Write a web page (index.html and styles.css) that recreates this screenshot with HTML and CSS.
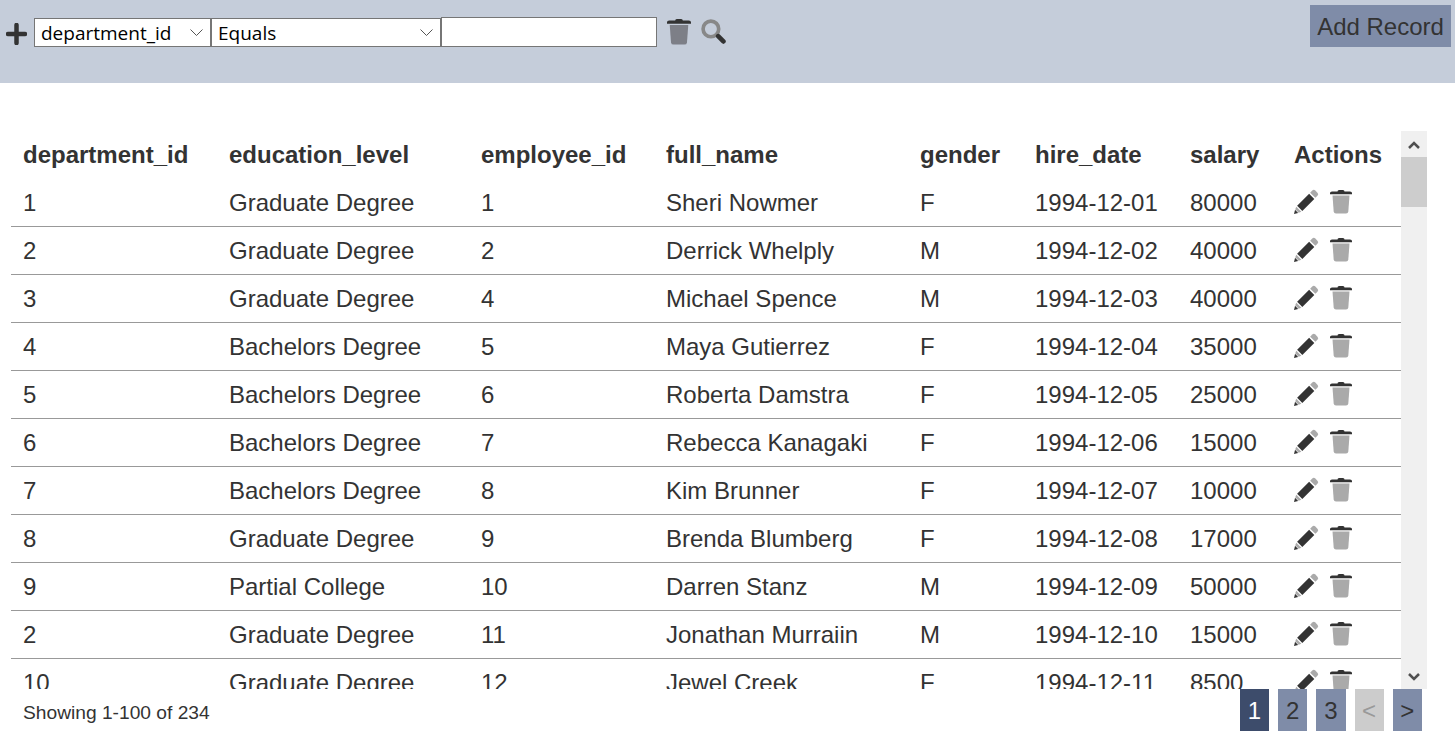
FILE: index.html
```html
<!DOCTYPE html>
<html lang="en">
<head>
    <meta charset="UTF-8">
    <title>Employees</title>
    <link rel="stylesheet" href="styles.css">
</head>
<body>
    <svg class="icon-defs" width="0" height="0">
        <symbol id="i-trash" viewBox="0 0 22 24">
            <path class="lid" d="M0 3.500Q0 2 2 2H7.500Q7.500 .5 9 .5H13Q14.500 .5 14.500 2H20Q22 2 22 3.500V4.800H0Z"/>
            <path class="body" d="M2.500 6H19.500L18.300 22Q18.100 24 16 24H6Q3.900 24 3.700 22Z"/>
        </symbol>
        <symbol id="i-pencil" viewBox="0 0 24 24">
            <path class="eraser" d="M17.500 1.500Q19 0 20.500 1.500L22.500 3.500Q24 5 22.500 6.500L20.500 8.500L15.500 3.500Z"/>
            <path class="shaft" d="M14.500 4.500L19.500 9.500L8 21L3 16Z"/>
            <path class="eraser" d="M2.200 17L7 21.800L4.500 22.800L1.200 19.500Z"/>
            <path class="shaft" d="M1 20L4 23L0 24Z"/>
        </symbol>
        <symbol id="i-search" viewBox="0 0 24 24">
            <circle class="lens" cx="9.500" cy="9.500" r="7.500"/>
            <path class="handle" d="M16.500 16.500L21.500 21.500"/>
        </symbol>
    </svg>

    <div class="toolbar">
        <div class="filter">
            <svg class="plus" viewBox="0 0 21 22"><path d="M10.500 2V20M2 11H19"/></svg>
            <select class="field-select">
                <option>department_id</option>
            </select>
            <select class="op-select">
                <option>Equals</option>
            </select>
            <input type="text" class="filter-input">
            <svg class="tool-icon trash-dark"><use href="#i-trash"/></svg>
            <svg class="tool-icon search-icon"><use href="#i-search"/></svg>
        </div>
        <button class="add-button">Add Record</button>
    </div>

    <div class="table-wrap">
        <div class="table-scroll">
            <table class="records">
                <colgroup>
                    <col class="col-dept"><col class="col-edu"><col class="col-emp"><col class="col-name">
                    <col class="col-gender"><col class="col-hire"><col class="col-salary"><col class="col-actions">
                </colgroup>
                <thead>
                    <tr>
                        <th>department_id</th><th>education_level</th><th>employee_id</th><th>full_name</th>
                        <th>gender</th><th>hire_date</th><th>salary</th><th>Actions</th>
                    </tr>
                </thead>
                <tbody>
                    <tr><td>1</td><td>Graduate Degree</td><td>1</td><td>Sheri Nowmer</td><td>F</td><td>1994-12-01</td><td>80000</td><td><svg class="row-icon edit"><use href="#i-pencil"/></svg><svg class="row-icon del"><use href="#i-trash"/></svg></td></tr>
                    <tr><td>2</td><td>Graduate Degree</td><td>2</td><td>Derrick Whelply</td><td>M</td><td>1994-12-02</td><td>40000</td><td><svg class="row-icon edit"><use href="#i-pencil"/></svg><svg class="row-icon del"><use href="#i-trash"/></svg></td></tr>
                    <tr><td>3</td><td>Graduate Degree</td><td>4</td><td>Michael Spence</td><td>M</td><td>1994-12-03</td><td>40000</td><td><svg class="row-icon edit"><use href="#i-pencil"/></svg><svg class="row-icon del"><use href="#i-trash"/></svg></td></tr>
                    <tr><td>4</td><td>Bachelors Degree</td><td>5</td><td>Maya Gutierrez</td><td>F</td><td>1994-12-04</td><td>35000</td><td><svg class="row-icon edit"><use href="#i-pencil"/></svg><svg class="row-icon del"><use href="#i-trash"/></svg></td></tr>
                    <tr><td>5</td><td>Bachelors Degree</td><td>6</td><td>Roberta Damstra</td><td>F</td><td>1994-12-05</td><td>25000</td><td><svg class="row-icon edit"><use href="#i-pencil"/></svg><svg class="row-icon del"><use href="#i-trash"/></svg></td></tr>
                    <tr><td>6</td><td>Bachelors Degree</td><td>7</td><td>Rebecca Kanagaki</td><td>F</td><td>1994-12-06</td><td>15000</td><td><svg class="row-icon edit"><use href="#i-pencil"/></svg><svg class="row-icon del"><use href="#i-trash"/></svg></td></tr>
                    <tr><td>7</td><td>Bachelors Degree</td><td>8</td><td>Kim Brunner</td><td>F</td><td>1994-12-07</td><td>10000</td><td><svg class="row-icon edit"><use href="#i-pencil"/></svg><svg class="row-icon del"><use href="#i-trash"/></svg></td></tr>
                    <tr><td>8</td><td>Graduate Degree</td><td>9</td><td>Brenda Blumberg</td><td>F</td><td>1994-12-08</td><td>17000</td><td><svg class="row-icon edit"><use href="#i-pencil"/></svg><svg class="row-icon del"><use href="#i-trash"/></svg></td></tr>
                    <tr><td>9</td><td>Partial College</td><td>10</td><td>Darren Stanz</td><td>M</td><td>1994-12-09</td><td>50000</td><td><svg class="row-icon edit"><use href="#i-pencil"/></svg><svg class="row-icon del"><use href="#i-trash"/></svg></td></tr>
                    <tr><td>2</td><td>Graduate Degree</td><td>11</td><td>Jonathan Murraiin</td><td>M</td><td>1994-12-10</td><td>15000</td><td><svg class="row-icon edit"><use href="#i-pencil"/></svg><svg class="row-icon del"><use href="#i-trash"/></svg></td></tr>
                    <tr><td>10</td><td>Graduate Degree</td><td>12</td><td>Jewel Creek</td><td>F</td><td>1994-12-11</td><td>8500</td><td><svg class="row-icon edit"><use href="#i-pencil"/></svg><svg class="row-icon del"><use href="#i-trash"/></svg></td></tr>
                </tbody>
            </table>
        </div>
        <div class="scrollbar">
            <svg class="scroll-arrow" viewBox="0 0 12 8"><path d="M1 7L6 2L11 7"/></svg>
            <div class="scroll-track"><div class="scroll-thumb"></div></div>
            <svg class="scroll-arrow" viewBox="0 0 12 8"><path d="M1 1L6 6L11 1"/></svg>
        </div>
    </div>

    <div class="footer">
        <div class="showing">Showing 1-100 of 234</div>
        <div class="pager">
            <a href="#" class="page active">1</a>
            <a href="#" class="page">2</a>
            <a href="#" class="page">3</a>
            <a href="#" class="page disabled">&lt;</a>
            <a href="#" class="page">&gt;</a>
        </div>
    </div>
</body>
</html>
```
FILE: styles.css
```css
body {
    margin: 0;
    font-family: 'Liberation Sans', Arial, sans-serif;
    color: #333;
    background-color: #fff;
}

.icon-defs {
    display: block;
    height: 0;
}

.toolbar {
    display: flex;
    justify-content: space-between;
    align-items: flex-start;
    height: 83px;
    background-color: #c5cdda;
}

.filter {
    display: flex;
    align-items: flex-start;
    padding: 17px 0 0 5px;
}

.plus {
    width: 21px;
    height: 22px;
    margin: 6px 7px 0 1px;
    fill: none;
    stroke: #333;
    stroke-width: 4.5px;
    stroke-linecap: round;
}

select {
    appearance: none;
    height: 29px;
    margin-top: 1px;
    padding: 0 0 0 6px;
    border: 1px solid #767676;
    border-radius: 0;
    font-family: 'Open Sans', sans-serif;
    font-size: 19px;
    color: #000;
    background: #fff url("data:image/svg+xml,%3Csvg xmlns='http://www.w3.org/2000/svg' width='13' height='7'%3E%3Cpath d='M.5 .5L6.500 6.500L12.500 .5' fill='none' stroke='%23555'/%3E%3C/svg%3E") no-repeat right 7px center;
}

.field-select {
    width: 177px;
}

.op-select {
    width: 230px;
}

.filter-input {
    box-sizing: border-box;
    width: 216px;
    height: 30px;
    margin: 0;
    border: 1px solid #767676;
    background-color: #fff;
}

.tool-icon {
    width: 24px;
    height: 27px;
}

.trash-dark {
    margin: 1px 0 0 10px;
    --lid: #333;
    --body: #7d7f87;
}

.search-icon {
    width: 25px;
    height: 25px;
    margin: 2px 0 0 10px;
}

.lid { fill: var(--lid, #333); }
.body { fill: var(--body, #aaa); }
.shaft { fill: #333; }
.eraser { fill: #aaa; }
.lens { fill: none; stroke: #888; stroke-width: 3.5px; }
.handle { stroke: #333; stroke-width: 4.5px; stroke-linecap: round; }

.add-button {
    width: 141px;
    height: 42px;
    margin: 5px 4px 0 0;
    padding: 2px 0 0;
    border: none;
    font-family: 'Liberation Sans', Arial, sans-serif;
    font-size: 24px;
    color: #333;
    background-color: #7f8ca8;
}

.table-wrap {
    display: flex;
    height: 558px;
    margin: 48px 28px 0 11px;
}

.table-scroll {
    flex: 1;
    overflow: hidden;
}

.records {
    width: 1390px;
    table-layout: fixed;
    border-collapse: collapse;
    font-size: 24px;
}

.col-dept { width: 206px; }
.col-edu { width: 252px; }
.col-emp { width: 185px; }
.col-name { width: 254px; }
.col-gender { width: 115px; }
.col-hire { width: 155px; }
.col-salary { width: 104px; }
.col-actions { width: 119px; }

.records th,
.records td {
    height: 47px;
    padding: 0 0 0 12px;
    text-align: left;
    white-space: nowrap;
}

.records th {
    height: 48px;
}

.records td {
    border-bottom: 1px solid #999;
}

.row-icon {
    height: 25px;
    margin-bottom: 4px;
    vertical-align: middle;
}

.row-icon.edit {
    width: 25px;
    margin-right: 11px;
}

.row-icon.del {
    width: 22px;
}

.scrollbar {
    display: flex;
    flex-direction: column;
    align-items: center;
    width: 26px;
    background-color: #f0f0f0;
}

.scroll-arrow {
    flex: none;
    width: 12px;
    height: 8px;
    margin: 10px 0 8px;
    fill: none;
    stroke: #505050;
    stroke-width: 2.5px;
}

.scroll-track {
    flex: 1;
    width: 100%;
}

.scroll-thumb {
    height: 50px;
    background-color: #cdcdcd;
}

.footer {
    display: flex;
    justify-content: space-between;
    align-items: flex-start;
    padding: 0 33px 0 23px;
}

.showing {
    margin-top: 13px;
    font-size: 19.2px;
}

.pager {
    display: flex;
    gap: 9px;
}

.page {
    width: 29.25px;
    height: 42px;
    font-size: 24px;
    line-height: 44px;
    text-align: center;
    text-decoration: none;
    color: #333;
    background-color: #7f8ca8;
}

.page.active {
    color: #fff;
    background-color: #3d4c6b;
}

.page.disabled {
    color: #999;
    background-color: #ccc;
}
```
